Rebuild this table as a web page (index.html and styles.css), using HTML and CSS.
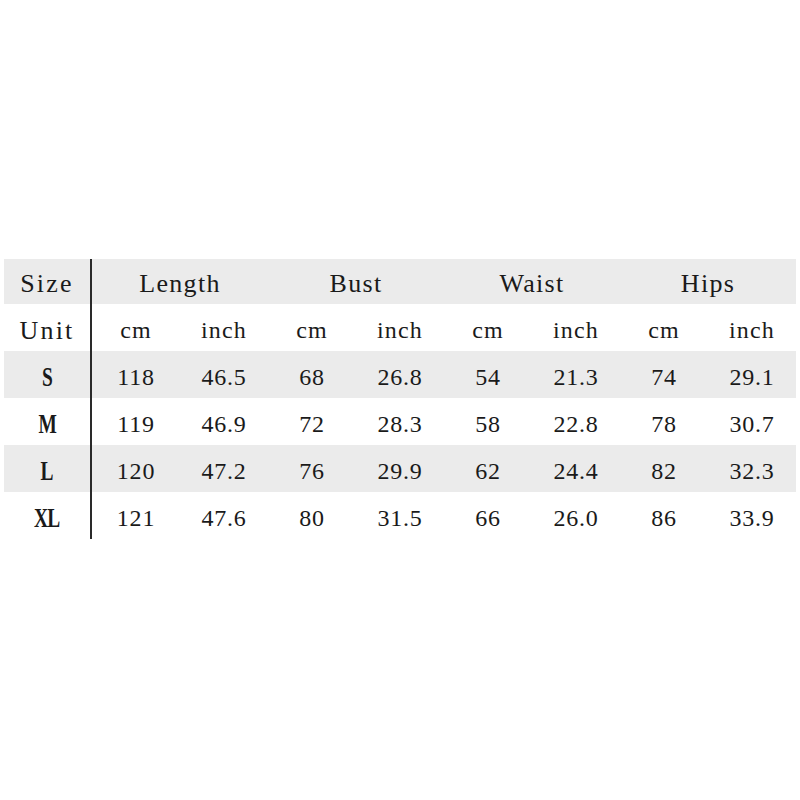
FILE: index.html
```html
<!DOCTYPE html>
<html>
<head>
<meta charset="utf-8">
<link rel="stylesheet" href="styles.css">
</head>
<body>
<div class="page">
  <div class="chart">
    <div class="cell first head label">Size</div>
    <div class="cell head group">Length</div>
    <div class="cell head group">Bust</div>
    <div class="cell head group">Waist</div>
    <div class="cell head group">Hips</div>

    <div class="cell first label">Unit</div>
    <div class="cell unit">cm</div><div class="cell unit">inch</div>
    <div class="cell unit">cm</div><div class="cell unit">inch</div>
    <div class="cell unit">cm</div><div class="cell unit">inch</div>
    <div class="cell unit">cm</div><div class="cell unit">inch</div>

    <div class="cell first shade"><span class="size">S</span></div>
    <div class="cell num shade">118</div><div class="cell num shade">46.5</div>
    <div class="cell num shade">68</div><div class="cell num shade">26.8</div>
    <div class="cell num shade">54</div><div class="cell num shade">21.3</div>
    <div class="cell num shade">74</div><div class="cell num shade">29.1</div>

    <div class="cell first"><span class="size">M</span></div>
    <div class="cell num">119</div><div class="cell num">46.9</div>
    <div class="cell num">72</div><div class="cell num">28.3</div>
    <div class="cell num">58</div><div class="cell num">22.8</div>
    <div class="cell num">78</div><div class="cell num">30.7</div>

    <div class="cell first shade"><span class="size">L</span></div>
    <div class="cell num shade">120</div><div class="cell num shade">47.2</div>
    <div class="cell num shade">76</div><div class="cell num shade">29.9</div>
    <div class="cell num shade">62</div><div class="cell num shade">24.4</div>
    <div class="cell num shade">82</div><div class="cell num shade">32.3</div>

    <div class="cell first"><span class="size">XL</span></div>
    <div class="cell num">121</div><div class="cell num">47.6</div>
    <div class="cell num">80</div><div class="cell num">31.5</div>
    <div class="cell num">66</div><div class="cell num">26.0</div>
    <div class="cell num">86</div><div class="cell num">33.9</div>
  </div>
</div>
</body>
</html>
```
FILE: styles.css
```css
html, body {
  margin: 0;
  padding: 0;
  background: #ffffff;
}
.page {
  width: 800px;
  height: 800px;
  padding-top: 259px;
  padding-left: 4px;
  box-sizing: border-box;
  font-family: "Liberation Serif", "Times New Roman", serif;
  color: #1a1a1a;
}
.chart {
  display: grid;
  grid-template-columns: 88px repeat(8, 88px);
  grid-template-rows: 45px repeat(5, 47px);
}
.cell {
  display: flex;
  align-items: center;
  justify-content: center;
  padding-top: 6px;
  box-sizing: border-box;
  font-size: 24px;
  letter-spacing: 1px;
}
.first {
  border-right: 2px solid #2a2a2a;
}
.head {
  background: #ebebeb;
  font-size: 26px;
  letter-spacing: 1.3px;
  padding-top: 4px;
}
.group {
  grid-column: span 2;
}
.label {
  font-size: 26px;
  letter-spacing: 2.2px;
}
.unit {
  font-size: 24px;
  letter-spacing: 1.2px;
}
.num {
  font-size: 24px;
  letter-spacing: 0.8px;
}
.size {
  display: inline-block;
  font-weight: bold;
  font-size: 27px;
  letter-spacing: -1px;
  transform: scaleX(0.72);
}
.shade {
  background: #ebebeb;
}
```
